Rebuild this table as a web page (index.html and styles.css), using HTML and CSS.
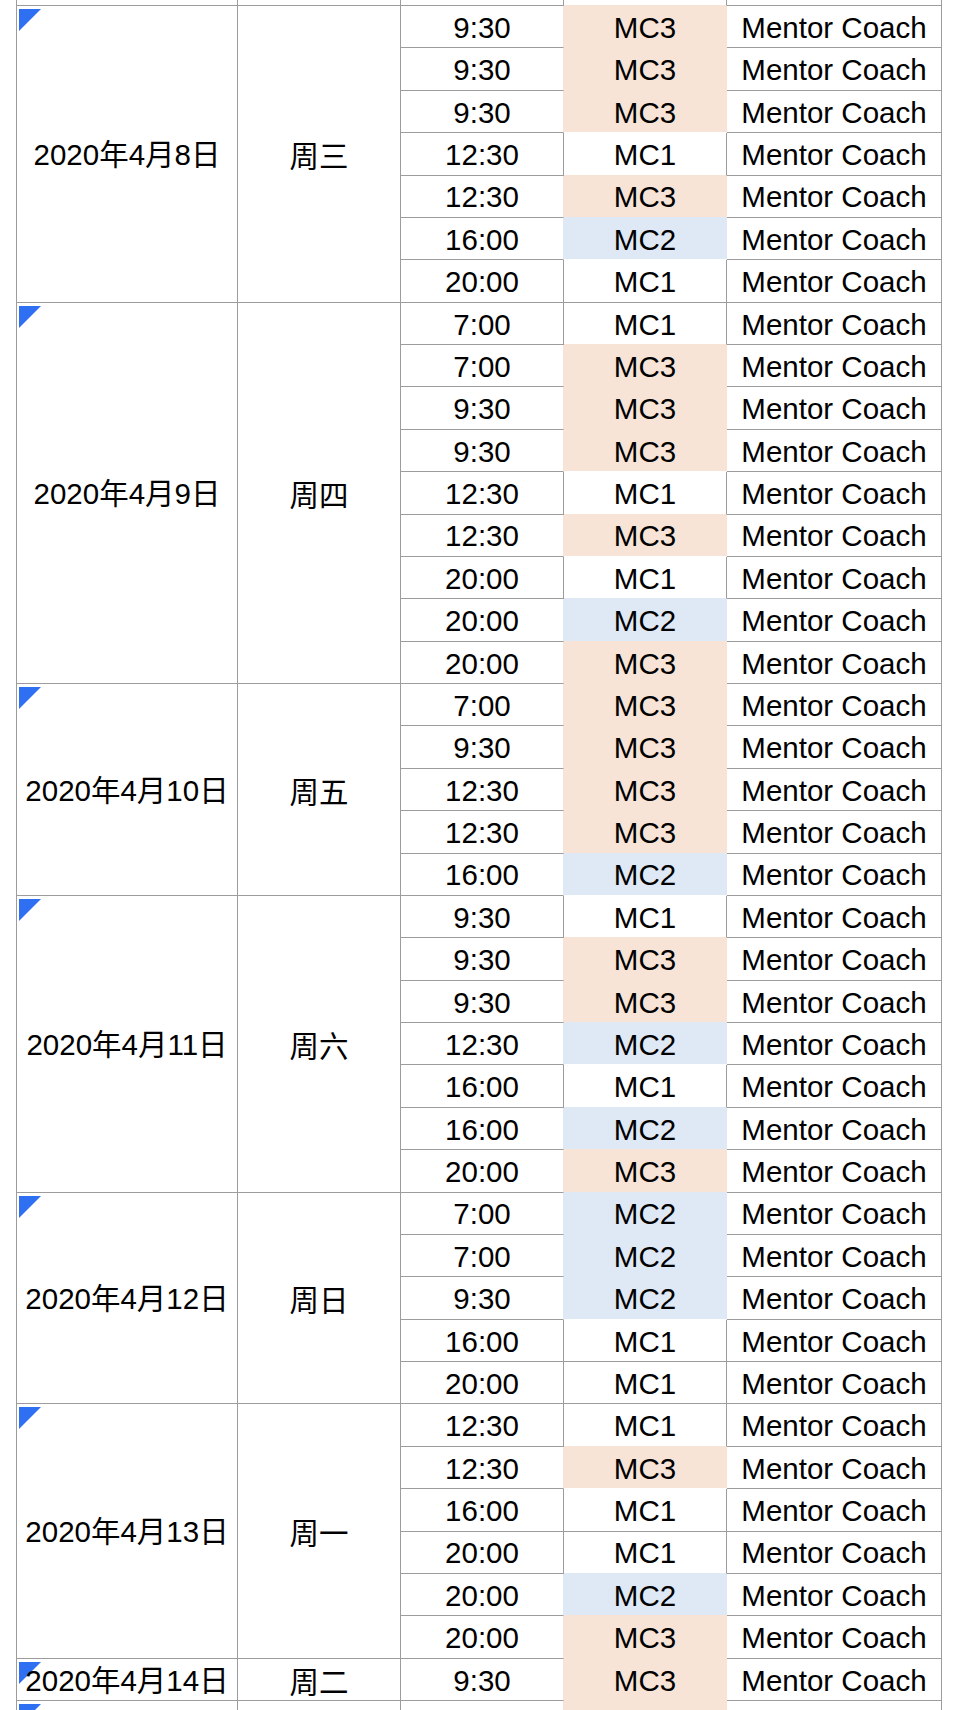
FILE: index.html
```html
<!DOCTYPE html>
<html lang="zh">
<head>
<meta charset="utf-8">
<title>Mentor Coach 排班表</title>
<link rel="stylesheet" href="styles.css">
</head>
<body>
<table class="sheet">
<colgroup>
<col class="c-date"><col class="c-day"><col class="c-time"><col class="c-mc"><col class="c-name">
</colgroup>
<tbody>
<tr class="stub"><td class="d"></td><td class="w"></td><td class="t"></td><td class="mc bp"></td><td class="n"></td></tr>

<tr class="p"><td class="d note" rowspan="7">2020年4月8日</td><td class="w" rowspan="7">周三</td><td class="t">9:30</td><td class="mc bp">MC3</td><td class="n">Mentor Coach</td></tr>
<tr class="p"><td class="t">9:30</td><td class="mc bp">MC3</td><td class="n">Mentor Coach</td></tr>
<tr class="p"><td class="t">9:30</td><td class="mc bw">MC3</td><td class="n">Mentor Coach</td></tr>
<tr><td class="t">12:30</td><td class="mc bp">MC1</td><td class="n">Mentor Coach</td></tr>
<tr class="p"><td class="t">12:30</td><td class="mc bb">MC3</td><td class="n">Mentor Coach</td></tr>
<tr class="b"><td class="t">16:00</td><td class="mc bw">MC2</td><td class="n">Mentor Coach</td></tr>
<tr><td class="t">20:00</td><td class="mc">MC1</td><td class="n">Mentor Coach</td></tr>

<tr><td class="d note" rowspan="9">2020年4月9日</td><td class="w" rowspan="9">周四</td><td class="t">7:00</td><td class="mc bp">MC1</td><td class="n">Mentor Coach</td></tr>
<tr class="p"><td class="t">7:00</td><td class="mc bp">MC3</td><td class="n">Mentor Coach</td></tr>
<tr class="p"><td class="t">9:30</td><td class="mc bp">MC3</td><td class="n">Mentor Coach</td></tr>
<tr class="p"><td class="t">9:30</td><td class="mc bw">MC3</td><td class="n">Mentor Coach</td></tr>
<tr><td class="t">12:30</td><td class="mc bp">MC1</td><td class="n">Mentor Coach</td></tr>
<tr class="p"><td class="t">12:30</td><td class="mc bw">MC3</td><td class="n">Mentor Coach</td></tr>
<tr><td class="t">20:00</td><td class="mc bb">MC1</td><td class="n">Mentor Coach</td></tr>
<tr class="b"><td class="t">20:00</td><td class="mc bp">MC2</td><td class="n">Mentor Coach</td></tr>
<tr class="p"><td class="t">20:00</td><td class="mc bp">MC3</td><td class="n">Mentor Coach</td></tr>

<tr class="p"><td class="d note" rowspan="5">2020年4月10日</td><td class="w" rowspan="5">周五</td><td class="t">7:00</td><td class="mc bp">MC3</td><td class="n">Mentor Coach</td></tr>
<tr class="p"><td class="t">9:30</td><td class="mc bp">MC3</td><td class="n">Mentor Coach</td></tr>
<tr class="p"><td class="t">12:30</td><td class="mc bp">MC3</td><td class="n">Mentor Coach</td></tr>
<tr class="p"><td class="t">12:30</td><td class="mc bb">MC3</td><td class="n">Mentor Coach</td></tr>
<tr class="b"><td class="t">16:00</td><td class="mc bw">MC2</td><td class="n">Mentor Coach</td></tr>

<tr><td class="d note" rowspan="7">2020年4月11日</td><td class="w" rowspan="7">周六</td><td class="t">9:30</td><td class="mc bp">MC1</td><td class="n">Mentor Coach</td></tr>
<tr class="p"><td class="t">9:30</td><td class="mc bp">MC3</td><td class="n">Mentor Coach</td></tr>
<tr class="p"><td class="t">9:30</td><td class="mc bb">MC3</td><td class="n">Mentor Coach</td></tr>
<tr class="b"><td class="t">12:30</td><td class="mc bw">MC2</td><td class="n">Mentor Coach</td></tr>
<tr><td class="t">16:00</td><td class="mc bb">MC1</td><td class="n">Mentor Coach</td></tr>
<tr class="b"><td class="t">16:00</td><td class="mc bp">MC2</td><td class="n">Mentor Coach</td></tr>
<tr class="p"><td class="t">20:00</td><td class="mc bb">MC3</td><td class="n">Mentor Coach</td></tr>

<tr class="b"><td class="d note" rowspan="5">2020年4月12日</td><td class="w" rowspan="5">周日</td><td class="t">7:00</td><td class="mc bb">MC2</td><td class="n">Mentor Coach</td></tr>
<tr class="b"><td class="t">7:00</td><td class="mc bb">MC2</td><td class="n">Mentor Coach</td></tr>
<tr class="b"><td class="t">9:30</td><td class="mc bw">MC2</td><td class="n">Mentor Coach</td></tr>
<tr><td class="t">16:00</td><td class="mc">MC1</td><td class="n">Mentor Coach</td></tr>
<tr><td class="t">20:00</td><td class="mc">MC1</td><td class="n">Mentor Coach</td></tr>

<tr><td class="d note" rowspan="6">2020年4月13日</td><td class="w" rowspan="6">周一</td><td class="t">12:30</td><td class="mc bp">MC1</td><td class="n">Mentor Coach</td></tr>
<tr class="p"><td class="t">12:30</td><td class="mc bw">MC3</td><td class="n">Mentor Coach</td></tr>
<tr><td class="t">16:00</td><td class="mc">MC1</td><td class="n">Mentor Coach</td></tr>
<tr><td class="t">20:00</td><td class="mc bb">MC1</td><td class="n">Mentor Coach</td></tr>
<tr class="b"><td class="t">20:00</td><td class="mc bp">MC2</td><td class="n">Mentor Coach</td></tr>
<tr class="p"><td class="t">20:00</td><td class="mc bp">MC3</td><td class="n">Mentor Coach</td></tr>

<tr class="p"><td class="d note">2020年4月14日</td><td class="w">周二</td><td class="t">9:30</td><td class="mc bp">MC3</td><td class="n">Mentor Coach</td></tr>

<tr class="p"><td class="d note"></td><td class="w"></td><td class="t"></td><td class="mc bw"></td><td class="n"></td></tr>
</tbody>
</table>
</body>
</html>
```

FILE: styles.css
```css
html {
  overflow: hidden;
  background: #ffffff;
}

body {
  margin: 0;
  color: #000000;
  font-family: "Liberation Sans", "Noto Sans CJK SC", sans-serif;
}

.sheet {
  margin-left: 16px;
  border-collapse: separate;
  border-spacing: 0;
  table-layout: fixed;
  width: 926px;
  border-left: 1px solid #9c9c9c;
  font-size: 29.5px;
}

.c-date { width: 221px; }
.c-day { width: 163px; }
.c-time { width: 163px; }
.c-mc { width: 163px; }
.c-name { width: 215px; }

.sheet td {
  box-sizing: border-box;
  height: 42.375px;
  padding: 2px 0 0 0;
  border-right: 1px solid #9c9c9c;
  border-bottom: 1px solid #9c9c9c;
  text-align: center;
  vertical-align: middle;
  white-space: nowrap;
  line-height: 1;
}

.sheet tr.stub td {
  height: 6px;
  padding: 0;
}

/* note marker in date cells */
.sheet td.d {
  position: relative;
}

.sheet td.note::before {
  content: "";
  position: absolute;
  left: 2px;
  top: 3px;
  width: 0;
  height: 0;
  border-top: 22px solid #2f6ff1;
  border-right: 22px solid transparent;
  z-index: -1;
}

.sheet td.w {
  font-family: "Noto Sans CJK SC", sans-serif;
}

/* filled MC cells cover their own gridlines */
.sheet tr.p td.t { border-right-color: #f7e4d7; }
.sheet tr.b td.t { border-right-color: #dfe9f5; }

.sheet tr.p td.mc {
  background: #f7e4d7;
  border-right-color: #f7e4d7;
}

.sheet tr.b td.mc {
  background: #dfe9f5;
  border-right-color: #dfe9f5;
}

.sheet td.mc.bp { border-bottom-color: #f7e4d7; }
.sheet td.mc.bb { border-bottom-color: #dfe9f5; }
.sheet td.mc.bw { border-bottom-color: #ffffff; }
```
